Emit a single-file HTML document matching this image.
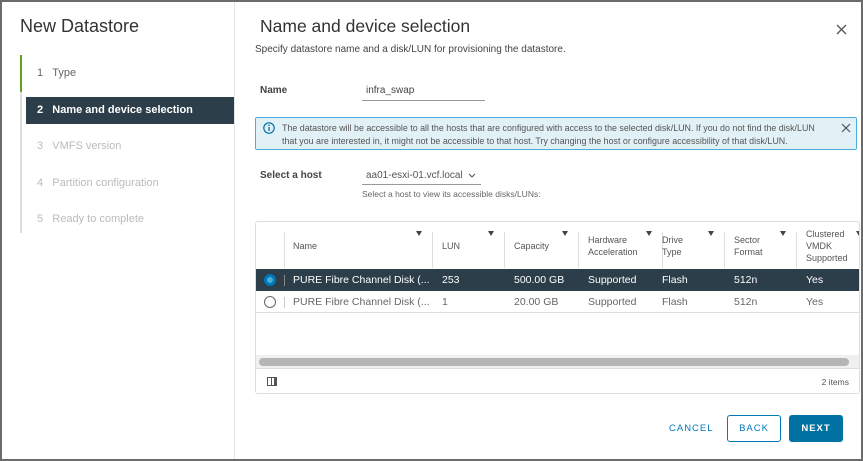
<!DOCTYPE html>
<html><head><meta charset="utf-8"><style>
*{box-sizing:border-box;margin:0;padding:0}
body{width:863px;height:461px;overflow:hidden;background:#fff;font-family:"Liberation Sans",sans-serif;color:#333;position:relative}
.frame{position:absolute;left:0;top:0;width:863px;height:461px;border:2px solid #6b6b6b;border-right-width:2px}
.a{position:absolute;white-space:nowrap}
.th{position:absolute;font-size:9px;color:#555;line-height:12px}
.fi{position:absolute;top:9px;width:0;height:0;border-left:3px solid transparent;border-right:3px solid transparent;border-top:5px solid #444}
.sep{position:absolute;top:10px;width:1px;height:36px;background:#ddd}
.cell{position:absolute;font-size:10.5px;line-height:22px}
</style></head><body>
<div class="frame"></div>
<div class="a" style="left:20px;top:16px;font-size:18px;color:#333">New Datastore</div>
<div class="a" style="left:20px;top:55px;width:2px;height:178px;background:#ddd"></div>
<div class="a" style="left:20px;top:55px;width:2px;height:37px;background:#62a420"></div>
<div class="a" style="left:234px;top:2px;width:1px;height:457px;background:#e5e5e5"></div>
<div class="a" style="left:37px;top:67px;font-size:11px;color:#666">1&nbsp;&nbsp;&nbsp;Type</div>
<div class="a" style="left:26px;top:97px;width:208px;height:27px;background:#2c3e4a"></div>
<div class="a" style="left:37px;top:104px;font-size:11px;color:#fff;font-weight:bold">2&nbsp;&nbsp;&nbsp;Name and device selection</div>
<div class="a" style="left:37px;top:140px;font-size:11px;color:#bbb">3&nbsp;&nbsp;&nbsp;VMFS version</div>
<div class="a" style="left:37px;top:177px;font-size:11px;color:#bbb">4&nbsp;&nbsp;&nbsp;Partition configuration</div>
<div class="a" style="left:37px;top:213px;font-size:11px;color:#bbb">5&nbsp;&nbsp;&nbsp;Ready to complete</div>
<div class="a" style="left:260px;top:16px;font-size:17.5px;color:#333">Name and device selection</div>
<svg class="a" style="left:836px;top:24px" width="11" height="11"><path d="M1 1L10 10M10 1L1 10" stroke="#555" stroke-width="1.3"/></svg>
<div class="a" style="left:255px;top:44px;font-size:10px;color:#444">Specify datastore name and a disk/LUN for provisioning the datastore.</div>
<div class="a" style="left:260px;top:85px;font-size:10px;font-weight:bold;color:#444">Name</div>
<div class="a" style="left:366px;top:85px;font-size:10px;color:#444">infra_swap</div>
<div class="a" style="left:362px;top:100px;width:123px;height:1px;background:#999"></div>
<div class="a" style="left:255px;top:117px;width:602px;height:33px;background:#e1f1f6;border:1px solid #49afd9;border-radius:2px"></div>
<svg class="a" style="left:263px;top:122px" width="12" height="12"><circle cx="6" cy="6" r="5.2" fill="none" stroke="#0072a3" stroke-width="1.2"/><rect x="5.4" y="5" width="1.3" height="4" fill="#0072a3"/><circle cx="6" cy="3.3" r=".8" fill="#0072a3"/></svg>
<div class="a" style="left:282px;top:122px;font-size:8.9px;line-height:13px;color:#555">The datastore will be accessible to all the hosts that are configured with access to the selected disk/LUN. If you do not find the disk/LUN<br>that you are interested in, it might not be accessible to that host. Try changing the host or configure accessibility of that disk/LUN.</div>
<svg class="a" style="left:841px;top:123px" width="10" height="10"><path d="M1 1L9 9M9 1L1 9" stroke="#555" stroke-width="1.2"/></svg>
<div class="a" style="left:260px;top:170px;font-size:10px;font-weight:bold;color:#444">Select a host</div>
<div class="a" style="left:366px;top:170px;font-size:10px;color:#555">aa01-esxi-01.vcf.local</div>
<svg class="a" style="left:468px;top:173px" width="8" height="6"><path d="M1 1L4 4L7 1" stroke="#555" fill="none"/></svg>
<div class="a" style="left:362px;top:184px;width:119px;height:1px;background:#999"></div>
<div class="a" style="left:362px;top:189px;font-size:8.5px;color:#666">Select a host to view its accessible disks/LUNs:</div>
<div class="a" style="left:255px;top:221px;width:605px;height:173px;border:1px solid #ddd;border-radius:3px;overflow:hidden">
 <div class="sep" style="left:28px"></div>
 <div class="th" style="left:37px;top:18px">Name</div><div class="fi" style="left:160px"></div><div class="sep" style="left:176px"></div>
 <div class="th" style="left:186px;top:18px">LUN</div><div class="fi" style="left:232px"></div><div class="sep" style="left:248px"></div>
 <div class="th" style="left:258px;top:18px">Capacity</div><div class="fi" style="left:306px"></div><div class="sep" style="left:322px"></div>
 <div class="th" style="left:332px;top:12px">Hardware<br>Acceleration</div><div class="fi" style="left:390px"></div><div class="sep" style="left:406px"></div>
 <div class="th" style="left:406px;top:12px">Drive<br>Type</div><div class="fi" style="left:452px"></div><div class="sep" style="left:468px"></div>
 <div class="th" style="left:478px;top:12px">Sector<br>Format</div><div class="fi" style="left:524px"></div><div class="sep" style="left:540px"></div>
 <div class="th" style="left:550px;top:6px">Clustered<br>VMDK<br>Supported</div><div class="fi" style="left:600px"></div>
 <div style="position:absolute;left:0;top:47px;width:605px;height:22px;background:#2c3e4a;color:#fff">
  <div style="position:absolute;left:8px;top:5px;width:12px;height:12px;border-radius:50%;background:#49afd9;border:3px solid #0079b8"></div>
  <div style="position:absolute;left:28px;top:6px;width:1px;height:11px;background:#888"></div>
  <div class="cell" style="left:37px">PURE Fibre Channel Disk (...</div><div class="cell" style="left:186px">253</div><div class="cell" style="left:258px">500.00 GB</div><div class="cell" style="left:332px">Supported</div><div class="cell" style="left:406px">Flash</div><div class="cell" style="left:478px">512n</div><div class="cell" style="left:550px">Yes</div>
 </div>
 <div style="position:absolute;left:0;top:69px;width:605px;height:22px;color:#666;border-bottom:1px solid #ddd">
  <div style="position:absolute;left:8px;top:5px;width:12px;height:12px;border-radius:50%;border:1px solid #666"></div>
  <div style="position:absolute;left:28px;top:6px;width:1px;height:11px;background:#ccc"></div>
  <div class="cell" style="left:37px">PURE Fibre Channel Disk (...</div><div class="cell" style="left:186px">1</div><div class="cell" style="left:258px">20.00 GB</div><div class="cell" style="left:332px">Supported</div><div class="cell" style="left:406px">Flash</div><div class="cell" style="left:478px">512n</div><div class="cell" style="left:550px">Yes</div>
 </div>
 <div style="position:absolute;left:0;top:133px;width:605px;height:13px;background:#f0f0f0"></div>
 <div style="position:absolute;left:3px;top:136px;width:590px;height:8px;border-radius:4px;background:#b5b5b5"></div>
 <div style="position:absolute;left:0;top:146px;width:605px;height:1px;background:#ddd"></div>
 <div style="position:absolute;left:11px;top:155px;width:10px;height:9px;border:1px solid #555;background:linear-gradient(90deg,#fff 0 3px,#555 3px 4px,#fff 4px 6px,#555 6px)"></div>
 <div style="position:absolute;right:10px;top:155px;font-size:8.5px;color:#555">2 items</div>
</div>
<div class="a" style="left:669px;top:423px;font-size:9.5px;letter-spacing:1px;color:#0079b8">CANCEL</div>
<div class="a" style="left:727px;top:415px;width:54px;height:27px;border:1px solid #0079b8;border-radius:3px;font-size:9.5px;letter-spacing:1px;color:#0079b8;text-align:center;line-height:25px">BACK</div>
<div class="a" style="left:789px;top:415px;width:54px;height:27px;background:#0072a3;border-radius:3px;font-size:9.5px;letter-spacing:1px;color:#fff;font-weight:bold;text-align:center;line-height:27px">NEXT</div>
</body></html>
